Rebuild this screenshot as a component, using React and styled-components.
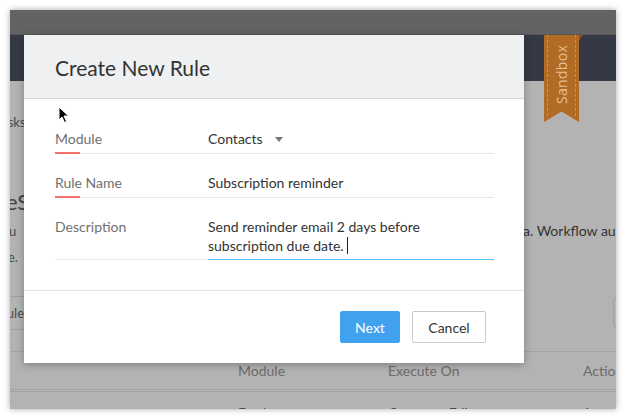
import React from 'react';
import styled, { createGlobalStyle } from 'styled-components';

const GlobalStyle = createGlobalStyle`
    html, body {
        margin: 0;
        padding: 0;
        background: #fff;
    }
    body {
        font-family: Lato, 'Open Sans', 'Liberation Sans', sans-serif;
        -webkit-font-smoothing: antialiased;
    }
`;

const Page = styled.div`
    width: 626px;
    height: 418px;
    padding: 10px;
    box-sizing: border-box;
`;

const Window = styled.div`
    position: relative;
    width: 606px;
    height: 399px;
    overflow: hidden;
    background: #b3b3b3;
    box-shadow: 0 0 6px rgba(0, 0, 0, 0.35);
`;

const TitleBar = styled.div`
    height: 24px;
    background: #636363;
    border-bottom: 1px solid #575757;
`;

const NavBar = styled.div`
    height: 46px;
    background: #353945;
`;

const BgRow = styled.div`
    display: grid;
    grid-template-columns: 513px 1fr;
    align-items: center;
    height: ${p => p.$h}px;
    padding-top: ${p => p.$pt || 0}px;
    box-sizing: border-box;
    white-space: nowrap;
    border-bottom: ${p => (p.$line ? '1px solid #a3a3a3' : 'none')};
`;

const Fragment = styled.span`
    display: block;
    margin-left: ${p => p.$shift || 0}px;
    font-size: ${p => p.$size || 13}px;
    line-height: ${p => p.$lh || 18}px;
    color: ${p => p.$color || '#4a4a4a'};
`;

const BgButton = styled.div`
    margin-left: -30px;
    width: 54px;
    height: 34px;
    border: 1px solid #a0a0a0;
    border-radius: 3px;
    box-sizing: border-box;
    display: flex;
    align-items: center;
    justify-content: flex-end;
    padding-right: 9px;
    font-size: 13px;
    color: #4a4a4a;
`;

const BgBox = styled.div`
    margin-left: 90px;
    width: 40px;
    height: 30px;
    border: 1px solid #a0a0a0;
    border-radius: 3px;
    box-sizing: border-box;
`;

const TableHead = styled.div`
    display: grid;
    grid-template-columns: 150px 195px 1fr;
    padding-left: 228px;
    height: 37px;
    align-items: center;
    border-bottom: 3px double #a3a3a3;
    font-size: 14px;
    color: #6c6c6c;
    white-space: nowrap;
`;

const TableRow = styled(TableHead)`
    border-bottom: none;
    align-items: start;
    padding-top: 12px;
    height: auto;
    color: #4a4a4a;
`;

const Ribbon = styled.div`
    position: absolute;
    left: 534px;
    top: 25px;
    width: 35px;
    height: 87px;
    background: #b26b24;
    clip-path: polygon(0 0, 100% 0, 100% 100%, 50% 88%, 0 100%);
    display: flex;
    align-items: center;
    justify-content: center;

    &::before {
        content: '';
        position: absolute;
        left: 3px;
        right: 3px;
        top: 0;
        bottom: 6px;
        border-left: 1px dashed rgba(255, 220, 170, 0.35);
        border-right: 1px dashed rgba(255, 220, 170, 0.35);
    }
`;

const RibbonFold = styled.div`
    position: absolute;
    left: 569px;
    top: 25px;
    width: 0;
    height: 0;
    border-left: 4px solid #8a5019;
    border-bottom: 6px solid transparent;
`;

const RibbonText = styled.span`
    transform: rotate(-90deg);
    margin-top: -8px;
    font-family: 'Open Sans', sans-serif;
    font-size: 14px;
    color: #e3bf95;
    letter-spacing: 0.3px;
`;

const Modal = styled.div`
    position: absolute;
    left: 14px;
    top: 25px;
    width: 500px;
    height: 328px;
    background: #fff;
    box-shadow: 0 2px 8px rgba(0, 0, 0, 0.28);
    display: flex;
    flex-direction: column;
`;

const ModalHeader = styled.div`
    height: 64px;
    background: #eff0f2;
    border-bottom: 1px solid #d6d7d9;
    box-sizing: border-box;
    display: flex;
    align-items: center;
    padding: 2px 31px 0;
    font-size: 21px;
    color: #333;
`;

const ModalBody = styled.div`
    flex: 1;
    padding: 11px 30px 0 31px;
    border-bottom: 1px solid #e3e3e3;
`;

const FieldRow = styled.div`
    display: flex;
    font-size: 14px;
    line-height: 19px;
`;

const Label = styled.div`
    position: relative;
    width: 153px;
    flex-shrink: 0;
    padding: 19px 0 ${p => p.$pb || 5}px;
    border-bottom: 1px solid #e6e6e6;
    color: #707070;

    &::after {
        content: '';
        display: ${p => (p.$required ? 'block' : 'none')};
        position: absolute;
        left: 0;
        bottom: -1px;
        width: 25px;
        height: 2px;
        background: #f2716b;
    }
`;

const Value = styled.div`
    flex: 1;
    display: flex;
    align-items: flex-start;
    padding: 19px 0 ${p => p.$pb || 5}px;
    border-bottom: 1px solid ${p => (p.$active ? '#54c0f3' : '#e6e6e6')};
    color: #333;
`;

const Caret = styled.span`
    width: 0;
    height: 0;
    margin: 8px 0 0 12px;
    border-left: 4px solid transparent;
    border-right: 4px solid transparent;
    border-top: 5px solid #777;
`;

const TextCursor = styled.span`
    display: inline-block;
    width: 1px;
    height: 17px;
    margin-left: 3px;
    vertical-align: -3px;
    background: #222;
`;

const Footer = styled.div`
    height: 72px;
    display: flex;
    align-items: center;
    justify-content: flex-end;
    gap: 12px;
    padding: 0 38px;
`;

const Button = styled.button`
    height: 32px;
    padding: 0;
    width: ${p => p.$w}px;
    border-radius: 2px;
    font-family: inherit;
    font-size: 14px;
    cursor: pointer;
    background: ${p => (p.$primary ? '#40a2ee' : '#fff')};
    color: ${p => (p.$primary ? '#fff' : '#333')};
    border: 1px solid ${p => (p.$primary ? '#40a2ee' : '#c9c9c9')};
`;

const Pointer = styled.svg`
    position: absolute;
    left: 48px;
    top: 96px;
`;

const App = () => (
    <Page>
        <GlobalStyle />
        <Window>
            <TitleBar />
            <NavBar />
            <BgRow $h={82}>
                <Fragment $shift={-15}>Tasks</Fragment>
            </BgRow>
            <BgRow $h={55} $pt={22}>
                <Fragment $shift={-4} $size={22} $lh={33} $color="#444">eS</Fragment>
            </BgRow>
            <BgRow $h={25}>
                <Fragment $shift={-9}>Ru</Fragment>
                <Fragment $size={14} $color="#333">a. Workflow automation</Fragment>
            </BgRow>
            <BgRow $h={27}>
                <Fragment $shift={-2}>e.</Fragment>
            </BgRow>
            <BgRow $h={60} $pt={26}>
                <BgButton>Rule</BgButton>
                <BgBox />
            </BgRow>
            <BgRow $h={22} $line />
            <TableHead>
                <span>Module</span>
                <span>Execute On</span>
                <span>Actions</span>
            </TableHead>
            <TableRow>
                <span>Deals</span>
                <span>Create or Edit</span>
                <span>1</span>
            </TableRow>

            <Ribbon>
                <RibbonText>Sandbox</RibbonText>
            </Ribbon>
            <RibbonFold />

            <Modal>
                <ModalHeader>Create New Rule</ModalHeader>
                <ModalBody>
                    <FieldRow>
                        <Label $required>Module</Label>
                        <Value>
                            Contacts
                            <Caret />
                        </Value>
                    </FieldRow>
                    <FieldRow>
                        <Label $required>Rule Name</Label>
                        <Value>Subscription reminder</Value>
                    </FieldRow>
                    <FieldRow>
                        <Label $pb={4}>Description</Label>
                        <Value $active $pb={4}>
                            <span>
                                Send reminder email 2 days before
                                <br />
                                subscription due date.
                                <TextCursor />
                            </span>
                        </Value>
                    </FieldRow>
                </ModalBody>
                <Footer>
                    <Button $primary $w={60}>Next</Button>
                    <Button $w={74}>Cancel</Button>
                </Footer>
            </Modal>

            <Pointer width="12" height="18" viewBox="0 0 12 18">
                <path
                    d="M1 1 L1 14 L4 11 L6.5 16.5 L8.5 15.5 L6 10 L10.5 10 Z"
                    fill="#000"
                    stroke="#fff"
                    strokeWidth="1"
                    strokeLinejoin="round"
                />
            </Pointer>
        </Window>
    </Page>
);

export default App;
